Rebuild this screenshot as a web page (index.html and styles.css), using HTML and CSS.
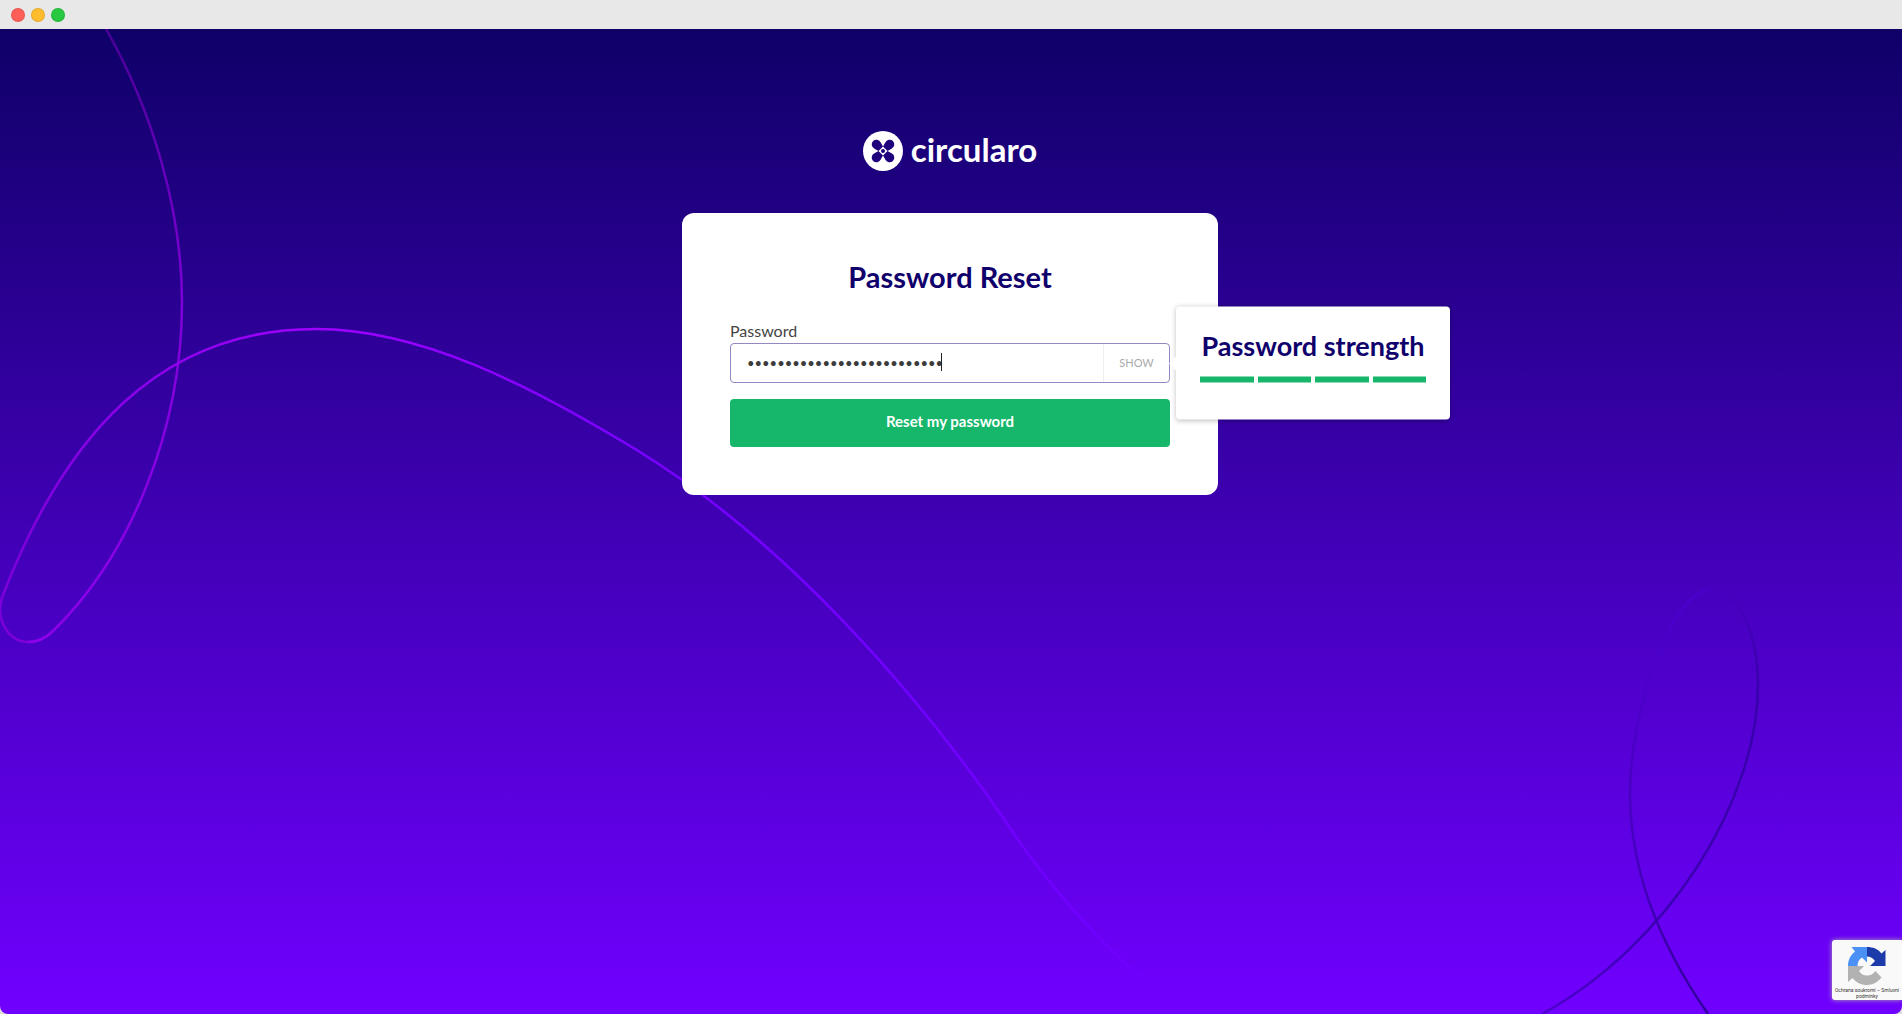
FILE: index.html
```html
<!DOCTYPE html>
<html lang="en">
  <head>
    <meta charset="utf-8" />
    <title>Password Reset</title>
    <link rel="stylesheet" href="styles.css">
  </head>

  <body>
    <div class="window-bar">
      <span class="dot red"></span>
      <span class="dot yellow"></span>
      <span class="dot green"></span>
    </div>

    <main class="page">
      <svg class="lines" viewBox="0 29 1902 985" preserveAspectRatio="xMidYMid slice" aria-hidden="true">
        <defs>
          <linearGradient id="g1" gradientUnits="userSpaceOnUse" x1="0" y1="29" x2="0" y2="640">
            <stop offset="0" stop-color="#4a0098" />
            <stop offset="0.45" stop-color="#7f00d8" />
            <stop offset="1" stop-color="#8f00ec" />
          </linearGradient>
          <linearGradient id="g2" gradientUnits="userSpaceOnUse" x1="0" y1="0" x2="1140" y2="0">
            <stop offset="0" stop-color="#7c00da" />
            <stop offset="0.28" stop-color="#a000ff" />
            <stop offset="0.56" stop-color="#7a00ff" />
            <stop offset="0.7" stop-color="#7200ff" />
            <stop offset="1" stop-color="#7000ff" />
          </linearGradient>
          <linearGradient id="g3" gradientUnits="userSpaceOnUse" x1="1542" y1="0" x2="1758" y2="0">
            <stop offset="0" stop-color="#4e00cc" />
            <stop offset="0.5" stop-color="#3c00b4" />
            <stop offset="1" stop-color="#3800ac" />
          </linearGradient>
          <linearGradient id="g4" gradientUnits="userSpaceOnUse" x1="0" y1="590" x2="0" y2="1014">
            <stop offset="0" stop-color="#4c00cc" />
            <stop offset="0.25" stop-color="#4b00c8" />
            <stop offset="0.6" stop-color="#4700c0" />
            <stop offset="1" stop-color="#3200a0" />
          </linearGradient>
          <linearGradient id="g5" gradientUnits="userSpaceOnUse" x1="0" y1="590" x2="0" y2="685">
            <stop offset="0" stop-color="#4700c0" />
            <stop offset="1" stop-color="#3800ac" />
          </linearGradient>
        </defs>
        <path stroke="url(#g1)" d="M106 29C152 110 182 210 182 302C182 430 130 556 53 631C46 638 38 642 28 642" />
        <path stroke="url(#g2)" d="M28 642C8 642 -6 618 3 595C65 435 160 329 316 329C420 329 530 385 640 452C785 542 915 690 1004 819C1045 882 1090 932 1139 976" />
        <path stroke="url(#g3)" d="M1542 1014C1668 945 1758 800 1758 685" />
        <path stroke="url(#g5)" d="M1758 685C1758 640 1742 590 1710 590" />
        <path stroke="url(#g4)" d="M1710 590C1672 590 1630 710 1630 793C1630 870 1660 945 1708 1014" />
      </svg>

      <header class="logo">
        <svg class="logo-mark" viewBox="0 0 40 40" aria-hidden="true">
          <circle cx="20" cy="20" r="20" fill="#fff" />
          <g fill="#1e007c">
            <path id="petal" d="M20 15.500L17.700 11.500A4.700 4.700 0 1 0 11.500 17.700L15.500 20Z" />
            <use href="#petal" transform="rotate(90 20 20)" />
            <use href="#petal" transform="rotate(180 20 20)" />
            <use href="#petal" transform="rotate(270 20 20)" />
            <circle cx="20" cy="20" r="2" />
          </g>
        </svg>
        <span class="logo-text">circularo</span>
      </header>

      <form class="card">
        <h1 class="title">Password Reset</h1>
        <label class="label" for="password">Password</label>
        <div class="field">
          <input class="input" id="password" type="password" value="abcdefghijklmnopqrstuvwxyz" />
          <span class="caret"></span>
          <button class="show" type="button">SHOW</button>
          <div class="strength">
            <h2 class="title">Password strength</h2>
            <div class="bars">
              <span></span>
              <span></span>
              <span></span>
              <span></span>
            </div>
          </div>
        </div>
        <button class="submit" type="button">Reset my password</button>
      </form>

      <div class="captcha">
        <svg class="captcha-logo" viewBox="0 0 38 38" aria-hidden="true">
          <path fill="#1c3aa9" d="M19 0C25 0 30 2 33.500 6.500L37.500 3V19H22L27 14C25 11 22.500 9.500 19 9.500Z" />
          <path fill="#4a90f5" d="M19 0V15.500L14 10.500C11 12.500 9.500 15 9.500 19H0C0 13 2.500 8 7 4.500L3.500 0Z" />
          <path fill="#b2b2b2" d="M0 19H16L11 24C13 27 15.500 28.500 19 28.500C22.500 28.500 25 27 27.500 24L33.500 30.500C30 35 25 38 19 38C13 38 8 35.500 4.500 31L0 35Z" />
        </svg>
        <a class="captcha-text" href="#">Ochrana soukromí – Smluvní podmínky</a>
      </div>
    </main>
  </body>
</html>
```

FILE: styles.css
```css
* {
  margin: 0;
  padding: 0;
  box-sizing: border-box;
}

body {
  min-height: 100vh;
  display: flex;
  flex-direction: column;
  background-color: #ddd;
  font-family: Lato, "Open Sans", sans-serif;
}

button,
input {
  font-family: inherit;
  border: 0;
  background: none;
}

.window-bar {
  height: 29px;
  padding-left: 11px;
  display: flex;
  align-items: center;
  gap: 6px;
  background-color: #e8e8e8;
}

.dot {
  width: 14px;
  height: 14px;
  border-radius: 50%;
  border: 1px solid rgba(0, 0, 0, 0.1);
}

.red {
  background-color: #ff5f57;
}

.yellow {
  background-color: #ffbd2e;
}

.green {
  background-color: #28c940;
}

.page {
  position: relative;
  flex: 1;
  display: flex;
  flex-direction: column;
  align-items: center;
  padding: 100px 2px 0 0;
  overflow: hidden;
  border-radius: 0 0 8px 8px;
  background: linear-gradient(#0f0068, #7000ff);
}

.lines {
  position: absolute;
  top: 0;
  left: 0;
  width: 100%;
  height: 100%;
  fill: none;
  stroke-width: 2.5px;
}

.logo {
  position: relative;
  height: 44px;
  display: flex;
  align-items: center;
  gap: 8px;
  color: #fff;
}

.logo-mark {
  width: 40px;
  height: 40px;
}

.logo-text {
  padding-bottom: 4px;
  font-size: 33px;
  line-height: 40px;
  font-weight: 700;
}

/* card */
.card {
  position: relative;
  width: 536px;
  max-width: 100%;
  margin-top: 40px;
  padding: 48px;
  border-radius: 12px;
  background-color: #fff;
}

.title {
  color: #10006b;
  font-size: 29px;
  line-height: 32px;
  font-weight: 700;
  text-align: center;
  white-space: nowrap;
}

.label {
  display: block;
  margin-top: 28px;
  margin-bottom: 2px;
  color: #444;
  font-size: 16px;
  line-height: 20px;
}

.field {
  position: relative;
  height: 40px;
  display: flex;
  border: 1px solid #9488c2;
  border-radius: 4px;
}

.input {
  flex: 1;
  min-width: 0;
  padding: 0 16px;
  color: #3c3c3c;
  font-size: 13px;
  outline: none;
}

.caret {
  position: absolute;
  left: 210px;
  top: 9px;
  width: 1px;
  height: 18px;
  background-color: #222;
}

.show {
  width: 66px;
  padding-bottom: 2px;
  border-left: 1px solid #eee;
  color: #aaa;
  font-size: 11px;
}

.submit {
  display: block;
  width: 100%;
  height: 48px;
  margin-top: 16px;
  padding-bottom: 4px;
  border-radius: 4px;
  background-color: #16b76a;
  color: #fff;
  font-size: 15px;
  font-weight: 700;
}

/* strength tooltip */
.strength {
  position: absolute;
  left: calc(100% + 7px);
  top: 50%;
  width: 274px;
  height: 113px;
  padding: 24px;
  transform: translateY(-50%);
  border-radius: 4px;
  background-color: #fff;
  box-shadow: 0 1px 5px rgba(0, 0, 0, 0.25);
}

.strength::before {
  content: "";
  position: absolute;
  left: -7px;
  top: 50px;
  border: 7px solid transparent;
  border-right-color: #fff;
  border-left: 0;
}

.strength .title {
  font-size: 27px;
  line-height: 30px;
}

.bars {
  display: flex;
  gap: 4px;
  margin-top: 16px;
}

.bars span {
  flex: 1;
  height: 6px;
  background-color: #16b76a;
}

/* captcha badge */
.captcha {
  position: absolute;
  right: 0;
  bottom: 14px;
  width: 70px;
  height: 60px;
  padding-top: 7px;
  border-radius: 3px 0 0 3px;
  background-color: #f9f9f9;
  box-shadow: 0 0 5px #aaa;
  text-align: center;
}

.captcha-logo {
  display: block;
  width: 38px;
  height: 38px;
  margin: 0 auto;
}

.captcha-text {
  display: block;
  margin-top: 2px;
  color: #333;
  font-family: Roboto, sans-serif;
  font-size: 5px;
  line-height: 6px;
  text-decoration: none;
}
```
